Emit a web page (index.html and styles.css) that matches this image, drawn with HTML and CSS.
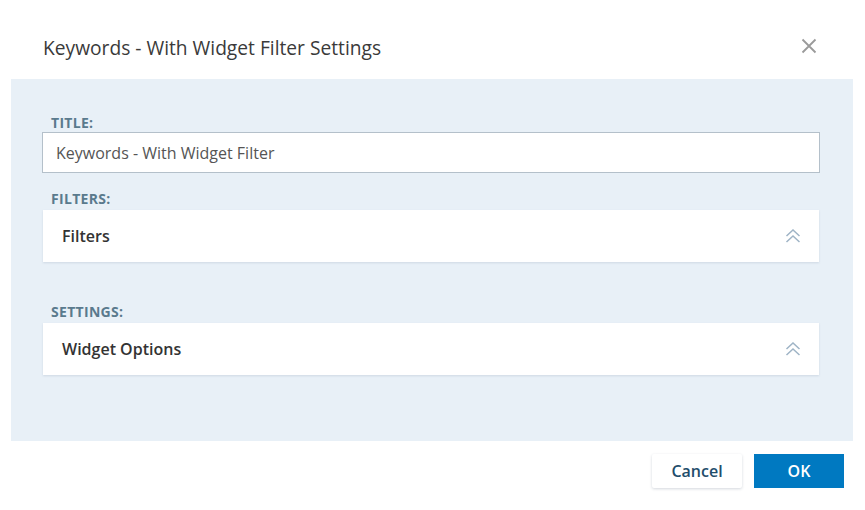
FILE: index.html
```html
<!DOCTYPE html>
<html lang="en">
<head>
<meta charset="utf-8">
<title>Keywords - With Widget Filter Settings</title>
<link rel="stylesheet" href="styles.css">
</head>
<body>
<div class="dialog">
  <header class="dialog-header">
    <h1 class="dialog-title">Keywords - With Widget Filter Settings</h1>
    <button class="close-btn" aria-label="Close">
      <svg width="16" height="16" viewBox="0 0 16 16"><path d="M1.5 1.5 L14.5 14.5 M14.5 1.5 L1.5 14.5" stroke="#9a9a9a" stroke-width="1.8" fill="none"/></svg>
    </button>
  </header>
  <section class="dialog-body">
    <label class="field-label">TITLE:</label>
    <div class="text-input">Keywords - With Widget Filter</div>
    <div class="field-label label-filters">FILTERS:</div>
    <div class="card">
      <span class="card-title">Filters</span>
      <svg class="chevrons" width="16" height="14" viewBox="0 0 16 14"><path d="M1.5 7 L8 1 L14.5 7 M1.5 13 L8 7 L14.5 13" stroke="#9fb4c6" stroke-width="1.5" fill="none"/></svg>
    </div>
    <div class="field-label label-settings">SETTINGS:</div>
    <div class="card">
      <span class="card-title">Widget Options</span>
      <svg class="chevrons" width="16" height="14" viewBox="0 0 16 14"><path d="M1.5 7 L8 1 L14.5 7 M1.5 13 L8 7 L14.5 13" stroke="#9fb4c6" stroke-width="1.5" fill="none"/></svg>
    </div>
  </section>
  <footer class="dialog-footer">
    <button class="btn btn-cancel">Cancel</button>
    <button class="btn btn-ok">OK</button>
  </footer>
</div>
</body>
</html>
```
FILE: styles.css
```css
* { box-sizing: border-box; }
html, body { margin: 0; padding: 0; background: #fff; }
body { font-family: "Open Sans", "Noto Sans", sans-serif; color: #333; }

.dialog { width: 865px; height: 510px; }

.dialog-header {
  height: 79px;
  display: flex;
  align-items: flex-start;
  justify-content: space-between;
  padding: 35px 48px 0 43px;
}
.dialog-title {
  margin: 0;
  font-size: 19.2px;
  line-height: 25px;
  font-weight: 400;
  color: #3a3a3a;
}
.close-btn {
  border: 0;
  background: none;
  padding: 0;
  margin-top: 3px;
  width: 16px;
  height: 16px;
  display: flex;
}

.dialog-body {
  margin: 0 12px 0 11px;
  background: #e8f0f7;
  padding: 35px 33px 66px 31px;
  display: flex;
  flex-direction: column;
}
.field-label {
  display: block;
  font-size: 14px;
  line-height: 17px;
  font-weight: 700;
  letter-spacing: 0.3px;
  color: #5a7a8d;
  padding-left: 9px;
  margin-bottom: 1px;
}
.label-filters { margin-top: 17px; margin-bottom: 3px; }
.label-settings { margin-top: 41px; margin-bottom: 3px; }

.text-input {
  height: 41px;
  border: 1px solid #b4c0ca;
  background: #fff;
  font-size: 16px;
  color: #555;
  padding: 0 13px;
  display: flex;
  align-items: center;
}

.card {
  margin: 0 1px;
  height: 52px;
  background: #fff;
  box-shadow: 0 1px 2px rgba(60, 90, 120, 0.15);
  display: flex;
  align-items: center;
  justify-content: space-between;
  padding: 0 18px 0 19px;
}
.card-title {
  font-size: 16px;
  font-weight: 600;
  color: #333;
}
.chevrons { margin-top: -1px; }

.dialog-footer {
  display: flex;
  justify-content: flex-end;
  gap: 12px;
  padding: 13px 21px 0 0;
}
.btn {
  width: 90px;
  height: 34px;
  border: 0;
  font-family: "Open Sans", "Noto Sans", sans-serif;
  font-size: 16px;
  font-weight: 600;
  cursor: pointer;
}
.btn-cancel {
  background: #fff;
  color: #1f4d6b;
  border-radius: 2px;
  box-shadow: 0 1px 3px rgba(40, 60, 90, 0.2);
}
.btn-ok {
  background: #0079c1;
  color: #fff;
}
```
